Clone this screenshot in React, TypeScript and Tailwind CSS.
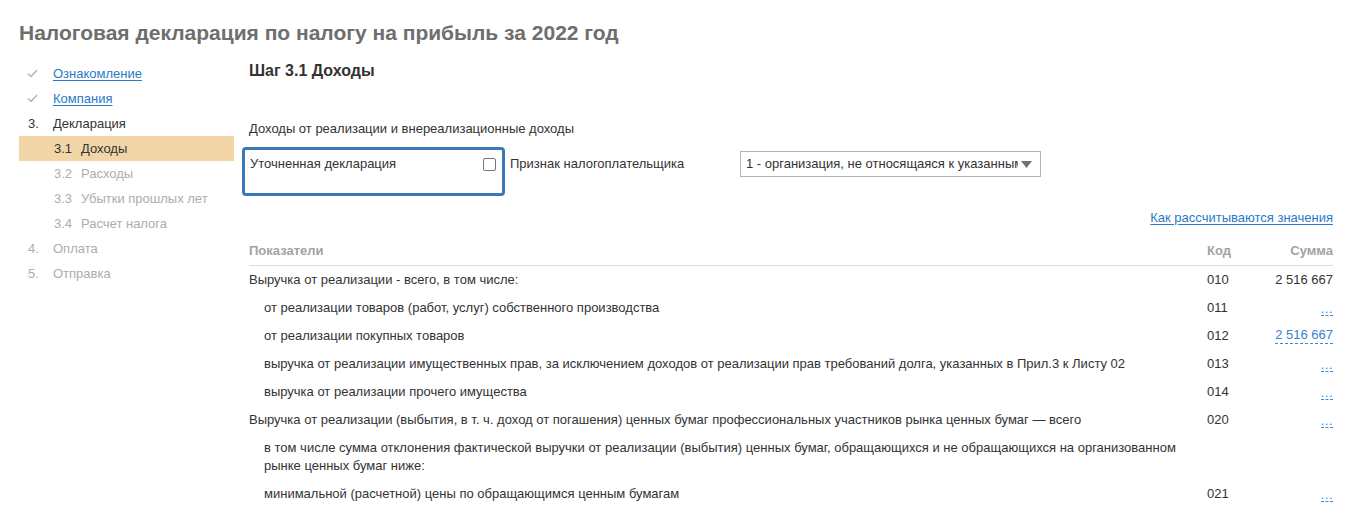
import React from 'react';

const steps = [
  { mark: 'check', label: 'Ознакомление', link: true },
  { mark: 'check', label: 'Компания', link: true },
  { mark: '3.', label: 'Декларация' },
];

const subSteps = [
  { num: '3.1', label: 'Доходы', active: true },
  { num: '3.2', label: 'Расходы' },
  { num: '3.3', label: 'Убытки прошлых лет' },
  { num: '3.4', label: 'Расчет налога' },
];

const rows = [
  { text: 'Выручка от реализации - всего, в том числе:', code: '010', sum: '2 516 667', plain: true },
  { text: 'от реализации товаров (работ, услуг) собственного производства', code: '011', indent: true },
  { text: 'от реализации покупных товаров', code: '012', sum: '2 516 667', indent: true },
  {
    text: 'выручка от реализации имущественных прав, за исключением доходов от реализации прав требований долга, указанных в Прил.3 к Листу 02',
    code: '013',
    indent: true,
  },
  { text: 'выручка от реализации прочего имущества', code: '014', indent: true },
  {
    text: 'Выручка от реализации (выбытия, в т. ч. доход от погашения) ценных бумаг профессиональных участников рынка ценных бумаг — всего',
    code: '020',
  },
  {
    text: 'в том числе сумма отклонения фактической выручки от реализации (выбытия) ценных бумаг, обращающихся и не обращающихся на организованном рынке ценных бумаг ниже:',
    indent: true,
  },
  { text: 'минимальной (расчетной) цены по обращающимся ценным бумагам', code: '021', indent: true },
];

function Check() {
  return (
    <svg width="11" height="9" viewBox="0 0 11 9" fill="none">
      <path d="M1 4.5L4 7.5L10 1" stroke="#b0b0b0" strokeWidth="1.3" />
    </svg>
  );
}

export default function App() {
  return (
    <div
      className="min-h-screen bg-white text-[13px] text-[#333]"
      style={{ fontFamily: '"Liberation Sans", Arial, sans-serif' }}
    >
      <div className="pl-[19px] pr-[17px] pt-[21px]">
        <h1 className="text-[21px] leading-[24px] font-bold text-[#6e6e6e]">
          Налоговая декларация по налогу на прибыль за 2022 год
        </h1>

        <div className="flex mt-[16px]">
          {/* Sidebar */}
          <nav className="w-[215px] shrink-0">
            {steps.map((s) => (
              <div key={s.label} className="flex items-center h-[25px]">
                <div className="w-[34px] pl-[8px] flex items-center">
                  {s.mark === 'check' ? <Check /> : <span className="pl-[1px]">{s.mark}</span>}
                </div>
                {s.link ? (
                  <a href="#" className="text-[#2a7bc6] underline underline-offset-2">
                    {s.label}
                  </a>
                ) : (
                  <span>{s.label}</span>
                )}
              </div>
            ))}
            {subSteps.map((s) => (
              <div
                key={s.num}
                className={`flex items-center h-[25px] pl-[35px] ${
                  s.active ? 'bg-[#f2d6a8] text-[#333]' : 'text-[#adadad]'
                }`}
              >
                <span className="w-[27px]">{s.num}</span>
                <span>{s.label}</span>
              </div>
            ))}
            <div className="flex items-center h-[25px] text-[#adadad]">
              <span className="w-[34px] pl-[9px]">4.</span>
              <span>Оплата</span>
            </div>
            <div className="flex items-center h-[25px] text-[#adadad]">
              <span className="w-[34px] pl-[9px]">5.</span>
              <span>Отправка</span>
            </div>
          </nav>

          {/* Main */}
          <main className="flex-1 pl-[15px]">
            <h2 className="text-[16px] leading-[20px] font-bold text-[#333]">Шаг 3.1 Доходы</h2>

            <p className="mt-[39px] leading-[18px]">Доходы от реализации и внереализационные доходы</p>

            <div className="flex items-start mt-[9px]">
              <div className="ml-[-7px] w-[263px] h-[49px] border-[3px] border-[#3b78b9] rounded-[4px] flex items-start justify-between pl-[5px] pr-[6px] pt-[5px]">
                <span className="leading-[18px]">Уточненная декларация</span>
                <span className="mt-[3px] w-[13px] h-[13px] border border-[#777] rounded-[2px] bg-white" />
              </div>
              <span className="ml-[5px] w-[230px] pt-[8px] leading-[18px]">Признак налогоплательщика</span>
              <div className="mt-[4px] w-[301px] h-[26px] border border-[#b3b3b3] flex items-center pl-[5px] pr-[8px] bg-white">
                <span className="flex-1 min-w-0 whitespace-nowrap overflow-hidden">
                  1 - организация, не относящаяся к указанным ниже
                </span>
                <svg width="11" height="7" viewBox="0 0 11 7" className="ml-[3px] shrink-0">
                  <path d="M0 0H11L5.5 7Z" fill="#707070" />
                </svg>
              </div>
            </div>

            <div className="flex justify-end mt-[13px]">
              <a href="#" className="text-[#2a7bc6] underline underline-offset-2 leading-[18px]">
                Как рассчитываются значения
              </a>
            </div>

            {/* Table */}
            <div className="mt-[14px] flex items-center h-[20px] font-bold text-[#a3a3a3] border-b border-[#dcdcdc] pb-[4px] box-content">
              <span className="flex-1">Показатели</span>
              <span className="w-[50px]">Код</span>
              <span className="w-[76px] text-right">Сумма</span>
            </div>

            {rows.map((r, i) => (
              <div key={i} className="flex items-start py-[5px] leading-[18px]">
                <span className={`flex-1 pr-[20px] ${r.indent ? 'pl-[15px]' : ''}`}>{r.text}</span>
                <span className="w-[50px]">{r.code}</span>
                <span className="w-[76px] flex justify-end">
                  {r.code &&
                    (r.plain ? (
                      <span>{r.sum}</span>
                    ) : r.sum ? (
                      <span className="text-[#3a82cc] border-b border-dashed border-[#3a8ad6] leading-[16px]">
                        {r.sum}
                      </span>
                    ) : (
                      <span className="mt-[3px] text-[#3a8ad6] border-b border-dashed border-[#3a8ad6] leading-[13px] text-[13px] tracking-[0.5px]">
                        ...
                      </span>
                    ))}
                </span>
              </div>
            ))}
          </main>
        </div>
      </div>
    </div>
  );
}
